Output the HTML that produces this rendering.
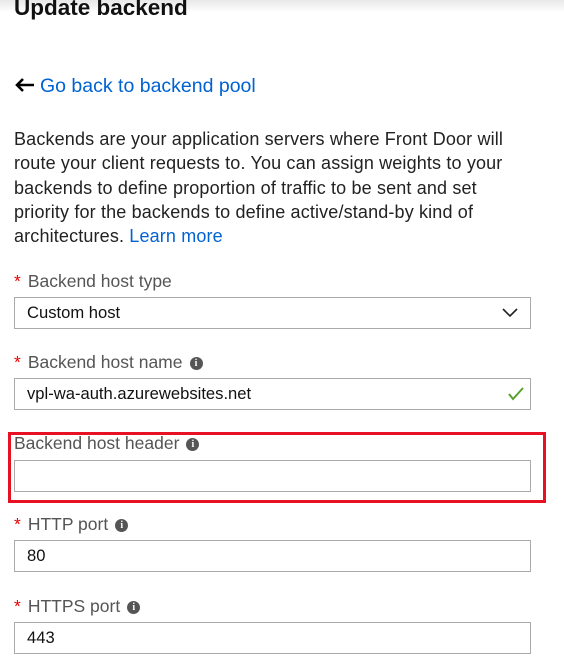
<!DOCTYPE html>
<html><head><style>
body{margin:0;width:564px;height:664px;overflow:hidden;background:#fff;font-family:"Liberation Sans",sans-serif;position:relative}
.a{position:absolute}
.t{left:14px;top:-5px;font-size:22.5px;color:#111;font-weight:600}
.lbl{left:14px;font-size:17.5px;color:#555;white-space:nowrap}
.lbl b{color:#e00;font-weight:normal;margin-right:7px}
.in{left:14px;width:515px;height:30px;border:1px solid #aaa;font-size:16.6px;color:#111;line-height:30px;box-sizing:content-box}
.in span{padding-left:12px}
.i{display:inline-block;width:13px;height:13px;border-radius:50%;background:#555;color:#fff;font-size:10px;line-height:13px;text-align:center;font-weight:bold;vertical-align:middle;margin-left:7px;font-family:"Liberation Serif",serif}
</style></head><body>
<div class="a" style="left:0;top:0;width:564px;height:12px;background:linear-gradient(#e8e8e8,#fff)"></div>
<div class="a t">Update backend</div>
<div class="a" style="left:14px;top:75px;font-size:19.5px;color:#0063d1;white-space:nowrap"><svg width="22" height="16" style="vertical-align:-1px;margin-right:4px"><path d="M20 8H3M9 2L3 8l6 6" fill="none" stroke="#000" stroke-width="2.6"/></svg>Go back to backend pool</div>
<div class="a" style="left:14px;top:127px;width:540px;font-size:18px;line-height:24.3px;color:#222;letter-spacing:0.15px;white-space:nowrap">Backends are your application servers where Front Door will<br>route your client requests to. You can assign weights to your<br>backends to define proportion of traffic to be sent and set<br>priority for the backends to define active/stand-by kind of<br>architectures. <span style="color:#0063d1">Learn more</span></div>
<div class="a lbl" style="top:271px"><b>*</b>Backend host type</div>
<div class="a in" style="top:297px"><span>Custom host</span><svg class="a" style="right:12px;top:10px" width="16" height="10"><path d="M1 1l7 7 7-7" fill="none" stroke="#222" stroke-width="1.6"/></svg></div>
<div class="a lbl" style="top:352px"><b>*</b>Backend host name<span class="i">i</span></div>
<div class="a in" style="top:378px"><span>vpl-wa-auth.azurewebsites.net</span><svg class="a" style="right:6px;top:8px" width="16" height="14"><path d="M1 7l4 5 10-11" fill="none" stroke="#5aa02c" stroke-width="2"/></svg></div>
<div class="a" style="left:8px;top:432px;width:532px;height:65px;border:3px solid #e81123"></div>
<div class="a lbl" style="top:433px">Backend host header<span class="i">i</span></div>
<div class="a in" style="top:460px"></div>
<div class="a lbl" style="top:514px"><b>*</b>HTTP port<span class="i">i</span></div>
<div class="a in" style="top:540px"><span>80</span></div>
<div class="a lbl" style="top:596px"><b>*</b>HTTPS port<span class="i">i</span></div>
<div class="a in" style="top:622px"><span>443</span></div>
</body></html>
